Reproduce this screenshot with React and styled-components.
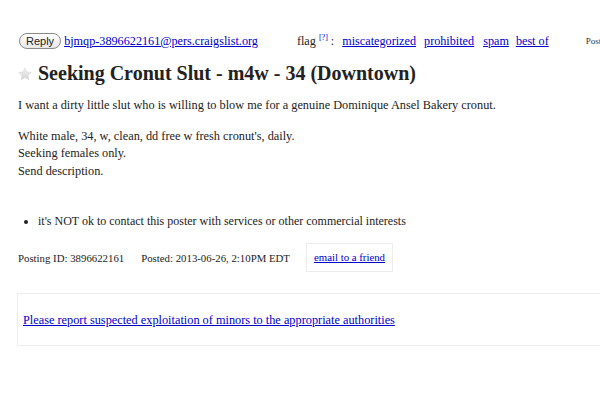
import React from "react";
import styled, { createGlobalStyle } from "styled-components";

const Global = createGlobalStyle`
  html, body {
    margin: 0;
    padding: 0;
    background: #fff;
    font-family: "Liberation Serif", "Times New Roman", serif;
    color: #222;
  }
  a {
    color: #0000cc;
  }
`;

const Page = styled.div`
  width: 600px;
  height: 400px;
  overflow: hidden;
  padding: 32px 0 0 18px;
  box-sizing: border-box;
`;

const TopBar = styled.div`
  display: flex;
  align-items: center;
  height: 18px;
  font-size: 12.2px;
  white-space: nowrap;
`;

const ReplyButton = styled.span`
  display: inline-flex;
  align-items: center;
  height: 14px;
  padding: 0 6px;
  margin-left: 1px;
  border: 1px solid #8a8a8a;
  border-radius: 8px;
  background: linear-gradient(#fff, #e8e8e8);
  font-family: "Liberation Sans", Arial, sans-serif;
  font-size: 11px;
  color: #222;
`;

const MailLink = styled.a`
  margin-left: 3px;
`;

const Flag = styled.span`
  margin-left: 39px;
  sup {
    font-size: 8px;
    color: #0000cc;
  }
`;

const FlagLink = styled.a`
  margin-left: ${(p) => p.$gap}px;
`;

const Pos = styled.span`
  margin-left: 37px;
  font-size: 9px;
  color: #333;
`;

const Title = styled.h2`
  display: flex;
  align-items: center;
  margin: 12px 0 0;
  font-size: 20px;
  font-weight: bold;
  color: #222;
  svg {
    margin-right: 6px;
  }
`;

const Body = styled.div`
  margin-top: 12px;
  font-size: 12.3px;
  line-height: 17.5px;
  p {
    margin: 0;
  }
  p + p {
    margin-top: 13px;
  }
`;

const Notices = styled.ul`
  margin: 34px 0 0;
  padding-left: 20px;
  font-size: 12px;
`;

const Meta = styled.div`
  display: flex;
  align-items: center;
  margin-top: 14px;
  font-size: 10.8px;
`;

const MetaItem = styled.span`
  margin-right: ${(p) => p.$gap}px;
`;

const FriendBox = styled.span`
  padding: 7px 7px 8px;
  border: 1px solid #ececec;
`;

const ReportBox = styled.div`
  margin-top: 21px;
  margin-left: -1px;
  height: 53px;
  border: 1px solid #ececec;
  border-right: none;
  display: flex;
  align-items: center;
  padding: 2px 0 0 5px;
  box-sizing: border-box;
  font-size: 12.3px;
`;

const Star = () => (
  <svg width="14" height="14" viewBox="0 0 24 24">
    <defs>
      <linearGradient id="sg" x1="0" y1="0" x2="0" y2="1">
        <stop offset="0" stopColor="#f2f2f2" />
        <stop offset="1" stopColor="#d4d4d4" />
      </linearGradient>
    </defs>
    <path
      d="M12 1.5l3.1 7.1 7.7.7-5.8 5.1 1.7 7.6L12 18l-6.7 4 1.7-7.6-5.8-5.1 7.7-.7z"
      fill="url(#sg)"
      stroke="#d0d0d0"
      strokeWidth="0.8"
    />
  </svg>
);

export default function App() {
  return (
    <Page>
      <Global />
      <TopBar>
        <ReplyButton>Reply</ReplyButton>
        <MailLink href="#">bjmqp-3896622161@pers.craigslist.org</MailLink>
        <Flag>
          flag <sup>[?]</sup> :
        </Flag>
        <FlagLink href="#" $gap={8}>miscategorized</FlagLink>
        <FlagLink href="#" $gap={8}>prohibited</FlagLink>
        <FlagLink href="#" $gap={9}>spam</FlagLink>
        <FlagLink href="#" $gap={7}>best of</FlagLink>
        <Pos>Posted</Pos>
      </TopBar>
      <Title>
        <Star />
        Seeking Cronut Slut - m4w - 34 (Downtown)
      </Title>
      <Body>
        <p>
          I want a dirty little slut who is willing to blow me for a genuine
          Dominique Ansel Bakery cronut.
        </p>
        <p>
          White male, 34, w, clean, dd free w fresh cronut's, daily.
          <br />
          Seeking females only.
          <br />
          Send description.
        </p>
      </Body>
      <Notices>
        <li>
          it's NOT ok to contact this poster with services or other commercial
          interests
        </li>
      </Notices>
      <Meta>
        <MetaItem $gap={17}>Posting ID: 3896622161</MetaItem>
        <MetaItem $gap={16}>Posted: 2013-06-26, 2:10PM EDT</MetaItem>
        <FriendBox>
          <a href="#">email to a friend</a>
        </FriendBox>
      </Meta>
      <ReportBox>
        <a href="#">
          Please report suspected exploitation of minors to the appropriate
          authorities
        </a>
      </ReportBox>
    </Page>
  );
}
